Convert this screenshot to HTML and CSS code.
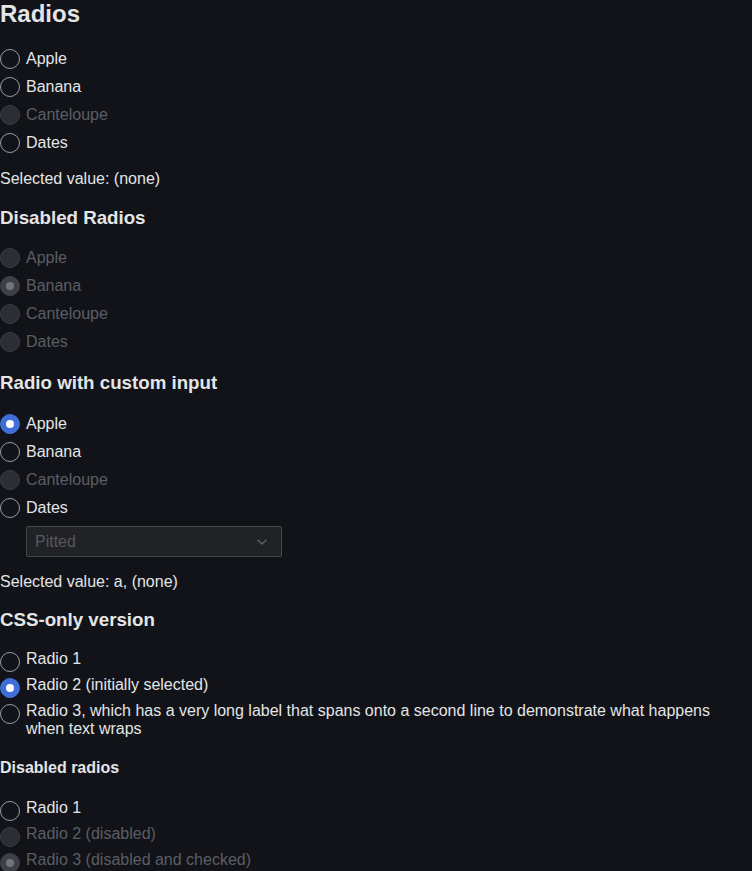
FILE: index.html
```html
<!DOCTYPE html>
<html>
<head>
<meta charset="utf-8">
<link rel="stylesheet" href="styles.css">
</head>
<body>
<h1 class="h1">Radios</h1>
<div class="group">
  <label class="item"><input type="radio" name="a" class="radio"><span>Apple</span></label>
  <label class="item"><input type="radio" name="a" class="radio"><span>Banana</span></label>
  <label class="item disabled"><input type="radio" name="a" class="radio" disabled><span>Canteloupe</span></label>
  <label class="item"><input type="radio" name="a" class="radio"><span>Dates</span></label>
</div>
<p class="value">Selected value: (none)</p>

<h2 class="h2">Disabled Radios</h2>
<div class="group">
  <label class="item disabled"><input type="radio" name="b" class="radio" disabled><span>Apple</span></label>
  <label class="item disabled"><input type="radio" name="b" class="radio" disabled checked><span>Banana</span></label>
  <label class="item disabled"><input type="radio" name="b" class="radio" disabled><span>Canteloupe</span></label>
  <label class="item disabled"><input type="radio" name="b" class="radio" disabled><span>Dates</span></label>
</div>

<h2 class="h2 h2-custom">Radio with custom input</h2>
<div class="group">
  <label class="item"><input type="radio" name="c" class="radio" checked><span>Apple</span></label>
  <label class="item"><input type="radio" name="c" class="radio"><span>Banana</span></label>
  <label class="item disabled"><input type="radio" name="c" class="radio" disabled><span>Canteloupe</span></label>
  <label class="item"><input type="radio" name="c" class="radio"><span>Dates</span></label>
</div>
<div class="select-wrap">
  <div class="select">
    <span class="select-text">Pitted</span>
    <svg class="chev" width="12" height="8" viewBox="0 0 12 8"><path d="M1.5 1.8 L6 6 L10.5 1.8" fill="none" stroke="#5e6167" stroke-width="1.4"/></svg>
  </div>
</div>
<p class="value value2">Selected value: a, (none)</p>

<h2 class="h2 h2-css">CSS-only version</h2>
<div class="cgroup">
  <label class="citem"><input type="radio" name="d" class="radio cradio"><span>Radio 1</span></label>
  <label class="citem"><input type="radio" name="d" class="radio cradio" checked><span>Radio 2 (initially selected)</span></label>
  <label class="citem"><input type="radio" name="d" class="radio cradio"><span>Radio 3, which has a very long label that spans onto a second line to demonstrate what happens when text wraps</span></label>
</div>

<h3 class="h3">Disabled radios</h3>
<div class="cgroup">
  <label class="citem"><input type="radio" name="e" class="radio cradio"><span>Radio 1</span></label>
  <label class="citem disabled"><input type="radio" name="e" class="radio cradio" disabled><span>Radio 2 (disabled)</span></label>
  <label class="citem disabled"><input type="radio" name="f" class="radio cradio" disabled checked><span>Radio 3 (disabled and checked)</span></label>
</div>
</body>
</html>
```
FILE: styles.css
```css
html, body {
  margin: 0;
  padding: 0;
  background: #111318;
  color: #e4e5e7;
  font-family: "Liberation Sans", Arial, sans-serif;
  font-size: 16px;
}
.h1 {
  margin: 0;
  font-size: 24px;
  line-height: 28px;
  font-weight: bold;
}
.h2 {
  margin: 17px 0 0;
  font-size: 18.72px;
  line-height: 24px;
  font-weight: bold;
}
.h2-custom { margin-top: 15px; }
.h2-css { margin-top: 16px; }
.h3 {
  margin: 20px 0 0;
  font-size: 16px;
  line-height: 20px;
  font-weight: bold;
}
.group {
  margin-top: 17px;
  display: flex;
  flex-direction: column;
}
.h2 + .group { margin-top: 14px; }
.h2-custom + .group { margin-top: 15px; }
.item {
  display: flex;
  align-items: center;
  gap: 6px;
  height: 28px;
  line-height: 18px;
}
.radio {
  appearance: none;
  -webkit-appearance: none;
  margin: 0;
  width: 20px;
  height: 20px;
  border-radius: 50%;
  border: 1px solid #9a9ca1;
  background: transparent;
  flex: none;
  display: grid;
  place-items: center;
}
.radio:checked {
  background: #3d6fd6;
  border-color: #3d6fd6;
}
.radio:checked::after {
  content: "";
  width: 8px;
  height: 8px;
  border-radius: 50%;
  background: #ffffff;
}
.radio:disabled {
  background: #2c2e33;
  border-color: #3a3c41;
}
.radio:disabled:checked {
  background: #3e4045;
  border-color: #3e4045;
}
.radio:disabled:checked::after {
  background: #72757b;
}
.disabled { color: #5b5e64; }
.value {
  margin: 12px 0 0;
  line-height: 20px;
}
.value2 { margin-top: 15px; }
.select-wrap {
  padding-left: 26px;
  margin-top: 4px;
}
.select {
  width: 256px;
  height: 31px;
  box-sizing: border-box;
  border: 1px solid #46484d;
  border-radius: 2px;
  background: #212226;
  display: flex;
  align-items: center;
  justify-content: space-between;
  padding: 0 13px 0 8px;
}
.select-text { color: #55585e; }
.cgroup {
  margin-top: 18px;
  display: flex;
  flex-direction: column;
  gap: 4px;
}
.h3 + .cgroup { margin-top: 21px; }
.citem {
  display: flex;
  align-items: flex-start;
  gap: 6px;
  line-height: 18px;
}
.cradio { margin-top: 2px; }
```
